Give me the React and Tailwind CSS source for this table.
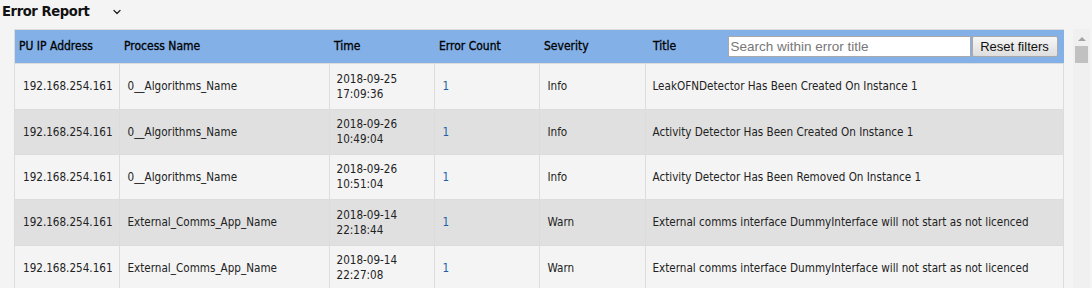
import { ChevronDown } from 'lucide-react';

const rows = [
    { ip: '192.168.254.161', process: '0__Algorithms_Name', date: '2018-09-25', time: '17:09:36', count: 1, severity: 'Info', title: 'LeakOFNDetector Has Been Created On Instance 1', h: 'h-[46px]' },
    { ip: '192.168.254.161', process: '0__Algorithms_Name', date: '2018-09-26', time: '10:49:04', count: 1, severity: 'Info', title: 'Activity Detector Has Been Created On Instance 1', h: 'h-[45px]' },
    { ip: '192.168.254.161', process: '0__Algorithms_Name', date: '2018-09-26', time: '10:51:04', count: 1, severity: 'Info', title: 'Activity Detector Has Been Removed On Instance 1', h: 'h-[45px]' },
    { ip: '192.168.254.161', process: 'External_Comms_App_Name', date: '2018-09-14', time: '22:18:44', count: 1, severity: 'Warn', title: 'External comms interface DummyInterface will not start as not licenced', h: 'h-[46px]' },
    { ip: '192.168.254.161', process: 'External_Comms_App_Name', date: '2018-09-14', time: '22:27:08', count: 1, severity: 'Warn', title: 'External comms interface DummyInterface will not start as not licenced', h: 'h-[45px]' },
];

const font = "font-['Tahoma','DejaVu_Sans_Condensed','DejaVu_Sans',sans-serif]";

const App = () => {
    return (
        <div className={`w-[1092px] h-[288px] overflow-hidden bg-[#f4f4f4] text-[#222] ${font}`}>
            <div className="flex items-center h-[22px] pl-[2px]">
                <h2 className="text-[14.6px] font-bold text-[#111] tracking-[-0.4px]">Error Report</h2>
                <ChevronDown size={12} strokeWidth={2.5} className="ml-[22px] mt-[1px] text-[#222]" />
            </div>

            <div className="flex mt-[7px]">
                <div className="ml-[14px] w-[1050px] border-l border-t border-[#dcdcdc]">
                    <table className="w-full border-collapse table-fixed text-[11.6px]">
                        <colgroup>
                            <col className="w-[104px]" />
                            <col className="w-[210px]" />
                            <col className="w-[105px]" />
                            <col className="w-[105px]" />
                            <col className="w-[106px]" />
                            <col />
                        </colgroup>
                        <thead>
                            <tr className="bg-[#83b0e7] h-[33px] text-left text-black text-[12px]">
                                <th className="pl-[4px] font-normal [-webkit-text-stroke:0.3px_black]">PU IP Address</th>
                                <th className="pl-[5px] font-normal [-webkit-text-stroke:0.3px_black]">Process Name</th>
                                <th className="pl-[5px] font-normal [-webkit-text-stroke:0.3px_black]">Time</th>
                                <th className="pl-[5px] font-normal [-webkit-text-stroke:0.3px_black]">Error Count</th>
                                <th className="pl-[5px] font-normal [-webkit-text-stroke:0.3px_black]">Severity</th>
                                <th className="pl-[8px] pr-[6px] font-normal">
                                    <div className="flex items-center">
                                        <span className="[-webkit-text-stroke:0.3px_black]">Title</span>
                                        <input
                                            placeholder="Search within error title"
                                            className="ml-auto w-[243px] h-[21px] bg-white border border-[#a9a9a9] px-[2px] text-[13.5px] font-normal font-['Liberation_Sans',sans-serif] placeholder:text-[#777] outline-none"
                                        />
                                        <button className="ml-[1px] w-[86px] h-[21px] border border-[#a9a9a9] rounded-[2px] bg-gradient-to-b from-[#f6f6f6] to-[#dedede] text-[13px] font-normal text-[#111] font-['Liberation_Sans',sans-serif]">
                                            Reset filters
                                        </button>
                                    </div>
                                </th>
                            </tr>
                        </thead>
                        <tbody>
                            {rows.map((r, i) => (
                                <tr key={i} className={`${r.h} border-t border-[#dcdcdc] ${i % 2 === 1 ? 'bg-[#e0e0e0]' : 'bg-[#f4f4f4]'}`}>
                                    <td className="pl-[8px] pt-[2px] border-r border-[#dcdcdc]">{r.ip}</td>
                                    <td className="pl-[8px] pt-[2px] border-r border-[#dcdcdc]">{r.process}</td>
                                    <td className="pl-[7px] pt-[1px] border-r border-[#dcdcdc] leading-[15px]">
                                        <div>{r.date}</div>
                                        <div>{r.time}</div>
                                    </td>
                                    <td className="pl-[8px] pt-[2px] border-r border-[#dcdcdc] text-[#1f5fa6]">{r.count}</td>
                                    <td className="pl-[8px] pt-[2px] border-r border-[#dcdcdc]">{r.severity}</td>
                                    <td className="pl-[7px] pt-[2px] border-r border-[#dcdcdc]">{r.title}</td>
                                </tr>
                            ))}
                        </tbody>
                    </table>
                </div>

                {/* scrollbar */}
                <div className="ml-[9px] w-[17px] h-[260px] bg-[#f0f0f0] flex flex-col items-center">
                    <div className="mt-[8px] w-0 h-0 border-l-[4px] border-r-[4px] border-b-[4px] border-l-transparent border-r-transparent border-b-[#a3a3a3]" />
                    <div className="mt-[5px] w-[13px] h-[17px] bg-[#c1c1c1]" />
                </div>
            </div>
        </div>
    );
};

export default App;
